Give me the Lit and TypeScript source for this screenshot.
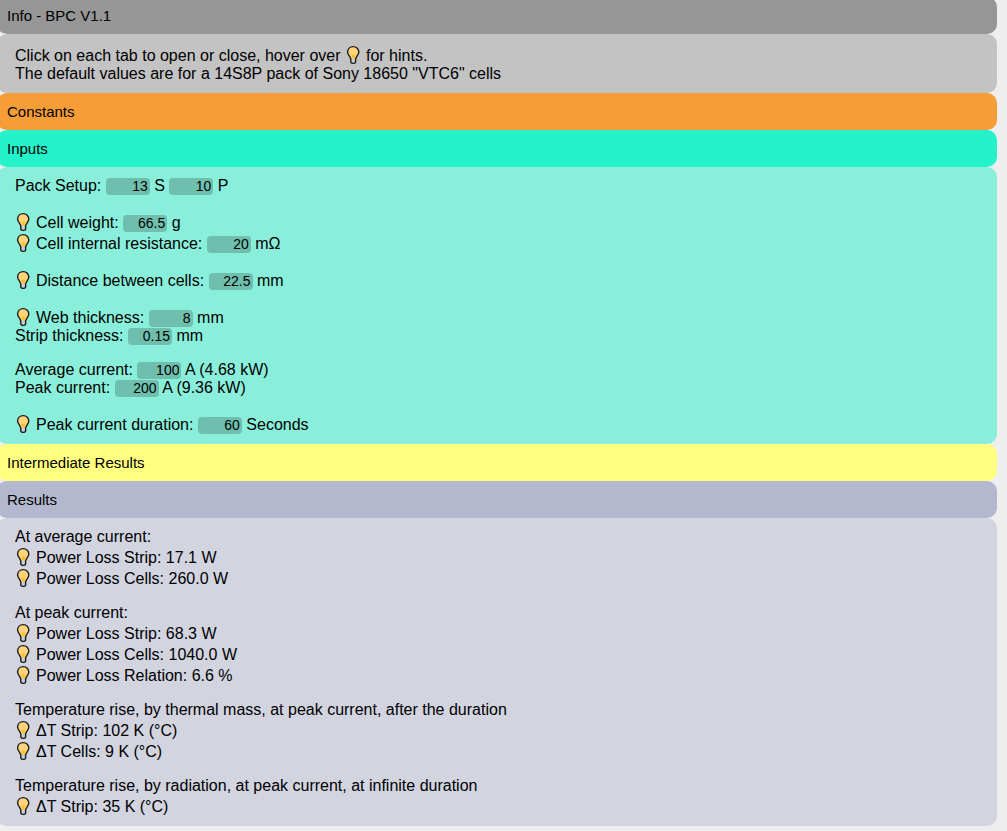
import { LitElement, html, css, svg, nothing, TemplateResult } from "lit";
import { customElement, state } from "lit/decorators.js";

type Values = Record<string, number>;

const NOMINAL_CELL_VOLTAGE = 3.6;

@customElement("hint-bulb")
class HintBulb extends LitElement {
  static styles = css`
    :host {
      display: inline-block;
      width: 16px;
      height: 21px;
      margin-right: 5px;
      vertical-align: -4px;
      cursor: help;
    }
    .bulb {
      display: block;
    }
  `;

  render() {
    return html`<svg class="bulb" width="16" height="21" viewBox="0 0 16 21" aria-hidden="true">
      ${svg`
        <path d="M8.2 2.600c-3.300 0-5.600 2.400-5.600 5.500 0 2.700 2.400 3.900 3.200 6.900v3.200q.5 1.200 2.400 1.200t2.400-1.200V15c.800-3 3.200-4.200 3.200-6.900 0-3.100-2.300-5.500-5.600-5.500z" fill="#ffd47a"/>
        <path d="M6.600 10.500h3.200v4H6.600z" fill="#ffc02e"/>
        <path d="M5.800 14.600h4.800v3.600q-.5 1.200-2.400 1.200t-2.400-1.200z" fill="#c4d2d8"/>
        <path d="M8.200 2.600c-3.300 0-5.600 2.400-5.600 5.500 0 2.700 2.400 3.900 3.200 6.900v3.200q.5 1.200 2.400 1.200t2.400-1.200V15c.800-3 3.200-4.200 3.200-6.900 0-3.100-2.300-5.500-5.600-5.500z" fill="none" stroke="#1c1c1c" stroke-width="1.400" stroke-linejoin="round"/>
      `}
    </svg>`;
  }
}

@customElement("app-root")
class AppRoot extends LitElement {
  @state() private open: Record<string, boolean> = { info: true, inputs: true, results: true };
  @state() private values: Values = {
    series: 13,
    parallel: 10,
    weight: 66.5,
    resistance: 20,
    distance: 22.5,
    web: 8,
    strip: 0.15,
    average: 100,
    peak: 200,
    duration: 60,
  };

  static styles = css`
    :host {
      display: block;
      box-sizing: border-box;
      min-height: 100vh;
      overflow: hidden;
      background: #eeeeee;
      color: #000;
      font: 16px/18px "Liberation Sans", Arial, sans-serif;
    }
    .tabs {
      margin: -3px 10px 5px -3px;
    }
    .tab {
      display: block;
      width: 100%;
      height: 37px;
      margin: 0;
      padding: 0 10px;
      border: 0;
      border-radius: 10px;
      font: 15px/18px "Liberation Sans", Arial, sans-serif;
      color: #000;
      text-align: left;
      cursor: pointer;
    }
    .panel {
      display: flex;
      flex-direction: column;
      gap: 16px;
      padding: 10px 18px;
      border-radius: 10px;
    }
    .info-tab { background: #969696; }
    .info-panel { background: #c3c3c3; }
    .constants-tab { background: #f59d36; }
    .constants-panel { background: #facf9b; }
    .inputs-tab { background: #24f2cb; }
    .inputs-panel { background: #8aefda; }
    .intermediate-tab { background: #ffff80; }
    .intermediate-panel { background: #ffffc0; }
    .results-tab { background: #b4b8cf; }
    .results-panel { background: #d2d4e0; }
    .field {
      box-sizing: border-box;
      width: 44px;
      height: 17px;
      margin: 0;
      padding: 0 2px;
      border: 0;
      border-radius: 4px;
      background: rgba(0, 0, 0, 0.2);
      color: #000;
      font: 14px/17px "Liberation Sans", Arial, sans-serif;
      text-align: right;
      vertical-align: baseline;
      appearance: textfield;
    }
    .field::-webkit-inner-spin-button {
      display: none;
    }
  `;

  private toggle(id: string) {
    this.open = { ...this.open, [id]: !this.open[id] };
  }

  private section(id: string, title: string, body: TemplateResult) {
    return html`<button class="tab ${id}-tab" aria-expanded=${this.open[id] ? "true" : "false"} @click=${() => this.toggle(id)}>${title}</button>
      ${this.open[id] ? html`<div class="panel ${id}-panel">${body}</div>` : nothing}`;
  }

  private input(id: string, label?: string) {
    return html`<input class="field" id=${id} type="number" step="any" aria-label=${label ?? nothing}
      .value=${String(this.values[id])}
      @input=${(e: Event) => {
        this.values = { ...this.values, [id]: Number((e.target as HTMLInputElement).value) };
      }}>`;
  }

  private row(id: string, label: string, unit: string, hint = false) {
    return html`<div>${hint ? html`<hint-bulb></hint-bulb>` : nothing}<label for=${id}>${label}:</label> ${this.input(id)} ${unit}</div>`;
  }

  private result(text: string) {
    return html`<div><hint-bulb></hint-bulb>${text}</div>`;
  }

  private kilowatts(amps: number) {
    return ((amps * this.values.series * NOMINAL_CELL_VOLTAGE) / 1000).toFixed(2);
  }

  render() {
    const v = this.values;
    return html`<main class="tabs">
      ${this.section("info", "Info - BPC V1.1", html`<div>
        <div>Click on each tab to open or close, hover over <hint-bulb></hint-bulb>for hints.</div>
        <div>The default values are for a 14S8P pack of Sony 18650 "VTC6" cells</div>
      </div>`)}
      ${this.section("constants", "Constants", html``)}
      ${this.section("inputs", "Inputs", html`
        <div><label for="series">Pack Setup:</label> ${this.input("series")} S ${this.input("parallel", "Parallel cells")} P</div>
        <div>
          ${this.row("weight", "Cell weight", "g", true)}
          ${this.row("resistance", "Cell internal resistance", "mΩ", true)}
        </div>
        ${this.row("distance", "Distance between cells", "mm", true)}
        <div>
          ${this.row("web", "Web thickness", "mm", true)}
          ${this.row("strip", "Strip thickness", "mm")}
        </div>
        <div>
          ${this.row("average", "Average current", `A (${this.kilowatts(v.average)} kW)`)}
          ${this.row("peak", "Peak current", `A (${this.kilowatts(v.peak)} kW)`)}
        </div>
        ${this.row("duration", "Peak current duration", "Seconds", true)}
      `)}
      ${this.section("intermediate", "Intermediate Results", html``)}
      ${this.section("results", "Results", html`
        <div>
          <div>At average current:</div>
          ${this.result("Power Loss Strip: 17.1 W")}
          ${this.result("Power Loss Cells: 260.0 W")}
        </div>
        <div>
          <div>At peak current:</div>
          ${this.result("Power Loss Strip: 68.3 W")}
          ${this.result("Power Loss Cells: 1040.0 W")}
          ${this.result("Power Loss Relation: 6.6 %")}
        </div>
        <div>
          <div>Temperature rise, by thermal mass, at peak current, after the duration</div>
          ${this.result("ΔT Strip: 102 K (°C)")}
          ${this.result("ΔT Cells: 9 K (°C)")}
        </div>
        <div>
          <div>Temperature rise, by radiation, at peak current, at infinite duration</div>
          ${this.result("ΔT Strip: 35 K (°C)")}
        </div>
      `)}
    </main>`;
  }
}
